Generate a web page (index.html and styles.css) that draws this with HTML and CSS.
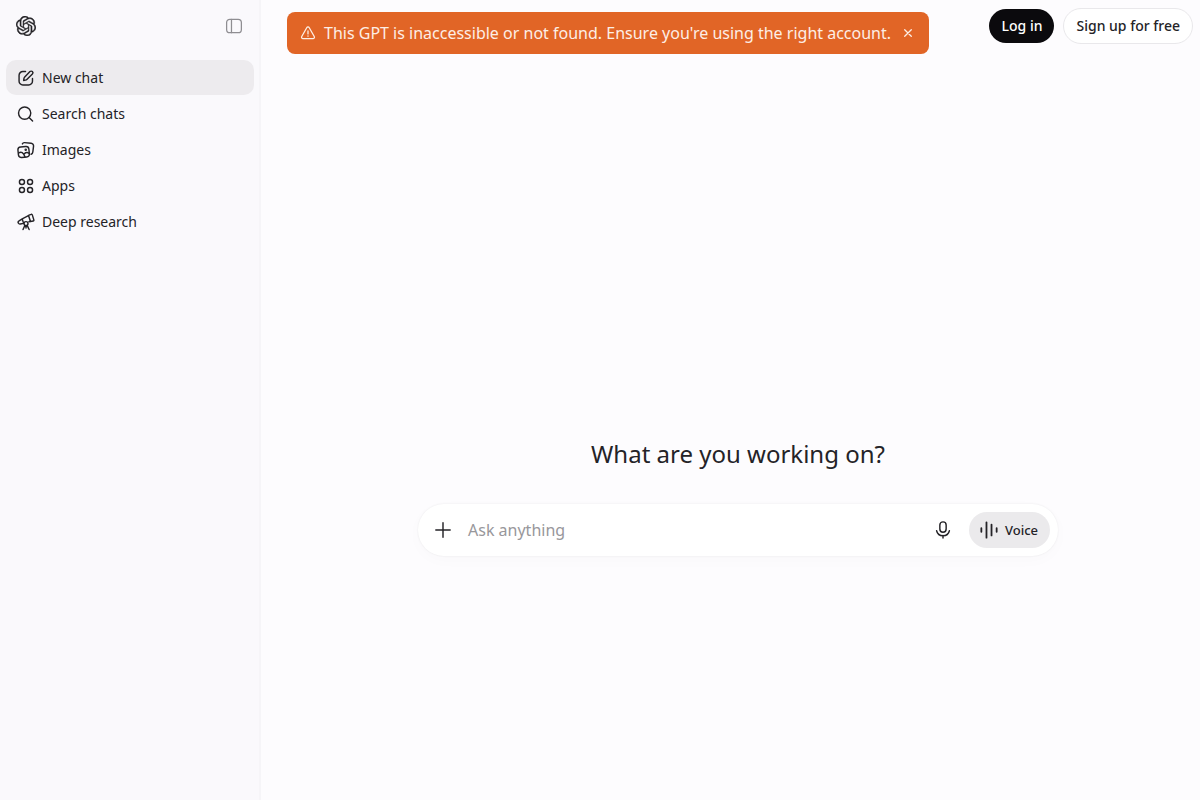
FILE: index.html
```html
<!DOCTYPE html>
<html lang="en">
<head>
  <meta charset="utf-8">
  <title>ChatGPT</title>
  <link rel="stylesheet" href="styles.css">
</head>
<body>
  <aside class="sidebar">
    <div class="sidebar-header">
      <svg class="logo" viewBox="0 0 24 24"><path d="M22.2819 9.8211a5.9847 5.9847 0 0 0-.5157-4.9108 6.0462 6.0462 0 0 0-6.5098-2.9A6.0651 6.0651 0 0 0 4.9807 4.1818a5.9847 5.9847 0 0 0-3.9977 2.9 6.0462 6.0462 0 0 0 .7427 7.0966 5.98 5.98 0 0 0 .511 4.9107 6.051 6.051 0 0 0 6.5146 2.9001A5.9847 5.9847 0 0 0 13.2599 24a6.0557 6.0557 0 0 0 5.7718-4.2058 5.9894 5.9894 0 0 0 3.9977-2.9001 6.0557 6.0557 0 0 0-.7475-7.0729zm-9.022 12.6081a4.4755 4.4755 0 0 1-2.8764-1.0408l.1419-.0804 4.7783-2.7582a.7948.7948 0 0 0 .3927-.6813v-6.7369l2.02 1.1686a.071.071 0 0 1 .038.052v5.5826a4.504 4.504 0 0 1-4.4945 4.4944zm-9.6607-4.1254a4.4708 4.4708 0 0 1-.5346-3.0137l.142.0852 4.783 2.7582a.7712.7712 0 0 0 .7806 0l5.8428-3.3685v2.3324a.0804.0804 0 0 1-.0332.0615L9.74 19.9502a4.4992 4.4992 0 0 1-6.1408-1.6464zM2.3408 7.8956a4.485 4.485 0 0 1 2.3655-1.9728V11.6a.7664.7664 0 0 0 .3879.6765l5.8144 3.3543-2.0201 1.1685a.0757.0757 0 0 1-.071 0l-4.8303-2.7865A4.504 4.504 0 0 1 2.3408 7.872zm16.5963 3.8558L13.1038 8.364 15.1192 7.2a.0757.0757 0 0 1 .071 0l4.8303 2.7913a4.4944 4.4944 0 0 1-.6765 8.1042v-5.6772a.79.79 0 0 0-.407-.667zm2.0107-3.0231l-.142-.0852-4.7735-2.7818a.7759.7759 0 0 0-.7854 0L9.409 9.2297V6.8974a.0662.0662 0 0 1 .0284-.0615l4.8303-2.7866a4.4992 4.4992 0 0 1 6.6802 4.66zM8.3065 12.863l-2.02-1.1638a.0804.0804 0 0 1-.038-.0567V6.0742a4.4992 4.4992 0 0 1 7.3757-3.4537l-.142.0805L8.704 5.459a.7948.7948 0 0 0-.3927.6813zm1.0976-2.3654l2.602-1.4998 2.6069 1.4998v2.9994l-2.5974 1.4997-2.6067-1.4997Z"/></svg>
      <svg class="icon toggle" viewBox="0 0 20 20"><rect x="1.8" y="2.6" width="16.4" height="14.8" rx="3.6"/><path d="M7.2 2.6v14.8"/></svg>
    </div>
    <nav class="menu">
      <a class="menu-item active">
        <svg class="icon" viewBox="0 0 20 20"><path d="M9.5 2.8h-3A4.2 4.2 0 0 0 2.3 7v6.5a4.2 4.2 0 0 0 4.2 4.2H13a4.2 4.2 0 0 0 4.2-4.2v-3"/><path d="M14.4 2.9a1.9 1.9 0 0 1 2.700 2.700l-5.900 5.900c-.5.5-1.100.8-1.800.9l-2 .3.3-2c.1-.7.4-1.300.9-1.800z"/></svg>
        New chat
      </a>
      <a class="menu-item">
        <svg class="icon" viewBox="0 0 20 20"><circle cx="8.5" cy="9" r="6.8"/><path d="M13.4 13.9l3.9 3.9"/></svg>
        Search chats
      </a>
      <a class="menu-item">
        <svg class="icon" viewBox="0 0 20 20"><rect x="1.300" y="6.300" width="12.200" height="11.800" rx="3.300" transform="rotate(-6 7.4 12.2)"/><path d="M6 3.200c.4-.9 1.300-1.500 2.300-1.400l7.400.7c1.700.2 2.900 1.600 2.700 3.200l-.8 6.400c-.2 1.500-.9 2.300-1.900 2.600"/><path d="M1.900 13.300c2.700-1.900 5.400-.8 7 4.400M8 14.300c1.700-1.600 3.700-1.800 5.500-.5"/><circle cx="9.7" cy="9.8" r=".6"/></svg>
        Images
      </a>
      <a class="menu-item">
        <svg class="icon" viewBox="0 0 20 20"><circle cx="5.5" cy="5.5" r="2.8"/><circle cx="14.5" cy="5.5" r="2.8"/><circle cx="5.5" cy="14.5" r="2.8"/><circle cx="14.5" cy="14.5" r="2.8"/></svg>
        Apps
      </a>
      <a class="menu-item">
        <svg class="icon" viewBox="0 0 20 20"><path d="M12.8 2.700l2.800-1.200c.6-.3 1.200 0 1.400.6l1.700 5.500c.2.600-.1 1.100-.7 1.200l-3 .6z"/><path d="M12.700 3L5.800 6.600 2.300 8.800c-.9.500-1.300 1.500-.8 2.400.4.900 1.300 1.300 2.200 1.100l3.500-.8M13.300 9.700l1.600-.5M5.800 6.600l1.400 4.400"/><circle cx="10" cy="11.800" r="2.200"/><path d="M8.700 13.800l-2 4.600M11.300 13.800l2.200 4.600M10 14.200v2.500"/></svg>
        Deep research
      </a>
    </nav>
  </aside>

  <main class="main">
    <header class="topbar">
      <div class="alert">
        <svg class="icon alert-icon" viewBox="0 0 20 20"><path d="M8.400 3.400a1.850 1.850 0 0 1 3.200 0l6.200 11a1.800 1.800 0 0 1-1.600 2.700H3.800a1.800 1.800 0 0 1-1.600-2.700z"/><path d="M10 7.500v3.600M10 13.600v.4"/></svg>
        <span>This GPT is inaccessible or not found. Ensure you're using the right account.</span>
        <svg class="icon alert-close" viewBox="0 0 10 10"><path d="M1.700 1.700l6.600 6.600M8.300 1.700L1.700 8.300"/></svg>
      </div>
      <div class="auth">
        <button class="btn btn-dark">Log in</button>
        <button class="btn btn-light">Sign up for free</button>
      </div>
    </header>

    <section class="prompt">
      <h1>What are you working on?</h1>
      <div class="composer">
        <svg class="icon plus" viewBox="0 0 20 20"><path d="M10 2v16M2 10h16"/></svg>
        <span class="placeholder">Ask anything</span>
        <svg class="icon mic" viewBox="0 0 20 20"><rect x="6.5" y="1" width="7" height="11.5" rx="3.5"/><path d="M2.9 10.8a7.3 7.3 0 0 0 14.2 0M10 16.2V19"/></svg>
        <button class="voice">
          <svg class="icon wave" viewBox="0 0 20 20"><path d="M1.500 8v4M7.200 1.500v17M12.800 4v12M18.500 8v4"/></svg>
          Voice
        </button>
      </div>
    </section>
  </main>
</body>
</html>
```
FILE: styles.css
```css
body {
  margin: 0;
  height: 100vh;
  display: flex;
  font-family: "Noto Sans", sans-serif;
  color: #242327;
  background-color: #fdfcfe;
  overflow: hidden;
}

.icon {
  width: 18px;
  height: 18px;
  flex: none;
  fill: none;
  stroke: currentColor;
  stroke-width: 1.6;
  stroke-linecap: round;
  stroke-linejoin: round;
}

.sidebar {
  box-sizing: border-box;
  width: 261px;
  flex: none;
  background-color: #faf9fc;
  border-right: 2px solid #f6f5f8;
}

.sidebar-header {
  display: flex;
  align-items: center;
  justify-content: space-between;
  height: 52px;
  padding: 0 16px;
}

.logo {
  width: 20px;
  height: 20px;
  fill: #242327;
  stroke: #242327;
  stroke-width: 0.4;
}

.toggle {
  color: #8f8e92;
  stroke-width: 1.4;
}

.menu {
  display: flex;
  flex-direction: column;
  gap: 1px;
  padding: 8px 5px 0 6px;
}

.menu-item {
  display: flex;
  align-items: center;
  gap: 7px;
  height: 35px;
  padding-left: 11px;
  border-radius: 10px;
  font-size: 14px;
}

.active {
  background-color: #edebee;
}

.main {
  flex: 1;
  display: flex;
  flex-direction: column;
}

.topbar {
  display: flex;
  justify-content: space-between;
  align-items: flex-start;
  padding: 8px 7px 0 26px;
}

.alert {
  box-sizing: border-box;
  display: flex;
  align-items: center;
  width: 642px;
  height: 42px;
  margin-top: 4px;
  padding: 0 13px;
  border-radius: 8px;
  background-color: #e16526;
  color: #fdeee5;
  font-size: 16px;
  white-space: nowrap;
}

.alert-icon {
  width: 16px;
  height: 16px;
  margin-right: 8px;
}

.alert-close {
  width: 10px;
  height: 10px;
  margin-left: 12px;
  stroke-width: 1.3;
}

.auth {
  display: flex;
  align-items: center;
  gap: 9px;
}

.btn {
  height: 36px;
  padding: 0 12px 2px;
  border: 1px solid #e9e8eb;
  border-radius: 18px;
  font-family: inherit;
  font-size: 14px;
  font-weight: 500;
  white-space: nowrap;
}

.btn-dark {
  height: 34px;
  padding: 0 12px 1px 13px;
  border: none;
  background-color: #0b0a0d;
  color: #fff;
}

.btn-light {
  background-color: #fff;
  color: #242327;
}

.prompt {
  display: flex;
  flex-direction: column;
  align-items: center;
  margin-top: 382px;
  padding-left: 15px;
}

h1 {
  margin: 0 0 32px;
  font-size: 24px;
  font-weight: 400;
  line-height: 36px;
}

.composer {
  box-sizing: border-box;
  display: flex;
  align-items: center;
  width: 640px;
  height: 52px;
  padding: 0 8px 0 16px;
  border-radius: 26px;
  background-color: #fff;
  box-shadow: 0 0 2px rgba(0, 0, 0, 0.08), 0 4px 16px rgba(0, 0, 0, 0.02);
}

.placeholder {
  flex: 1;
  margin-left: 16px;
  font-size: 16px;
  color: #98979b;
}

.voice {
  display: flex;
  align-items: center;
  gap: 7px;
  height: 36px;
  margin-left: 17px;
  padding: 0 12px 0 11px;
  border: none;
  border-radius: 18px;
  background-color: #ebeaec;
  color: #242327;
  font-family: inherit;
  font-size: 13px;
  font-weight: 500;
}

.wave {
  stroke-width: 2;
}
```
